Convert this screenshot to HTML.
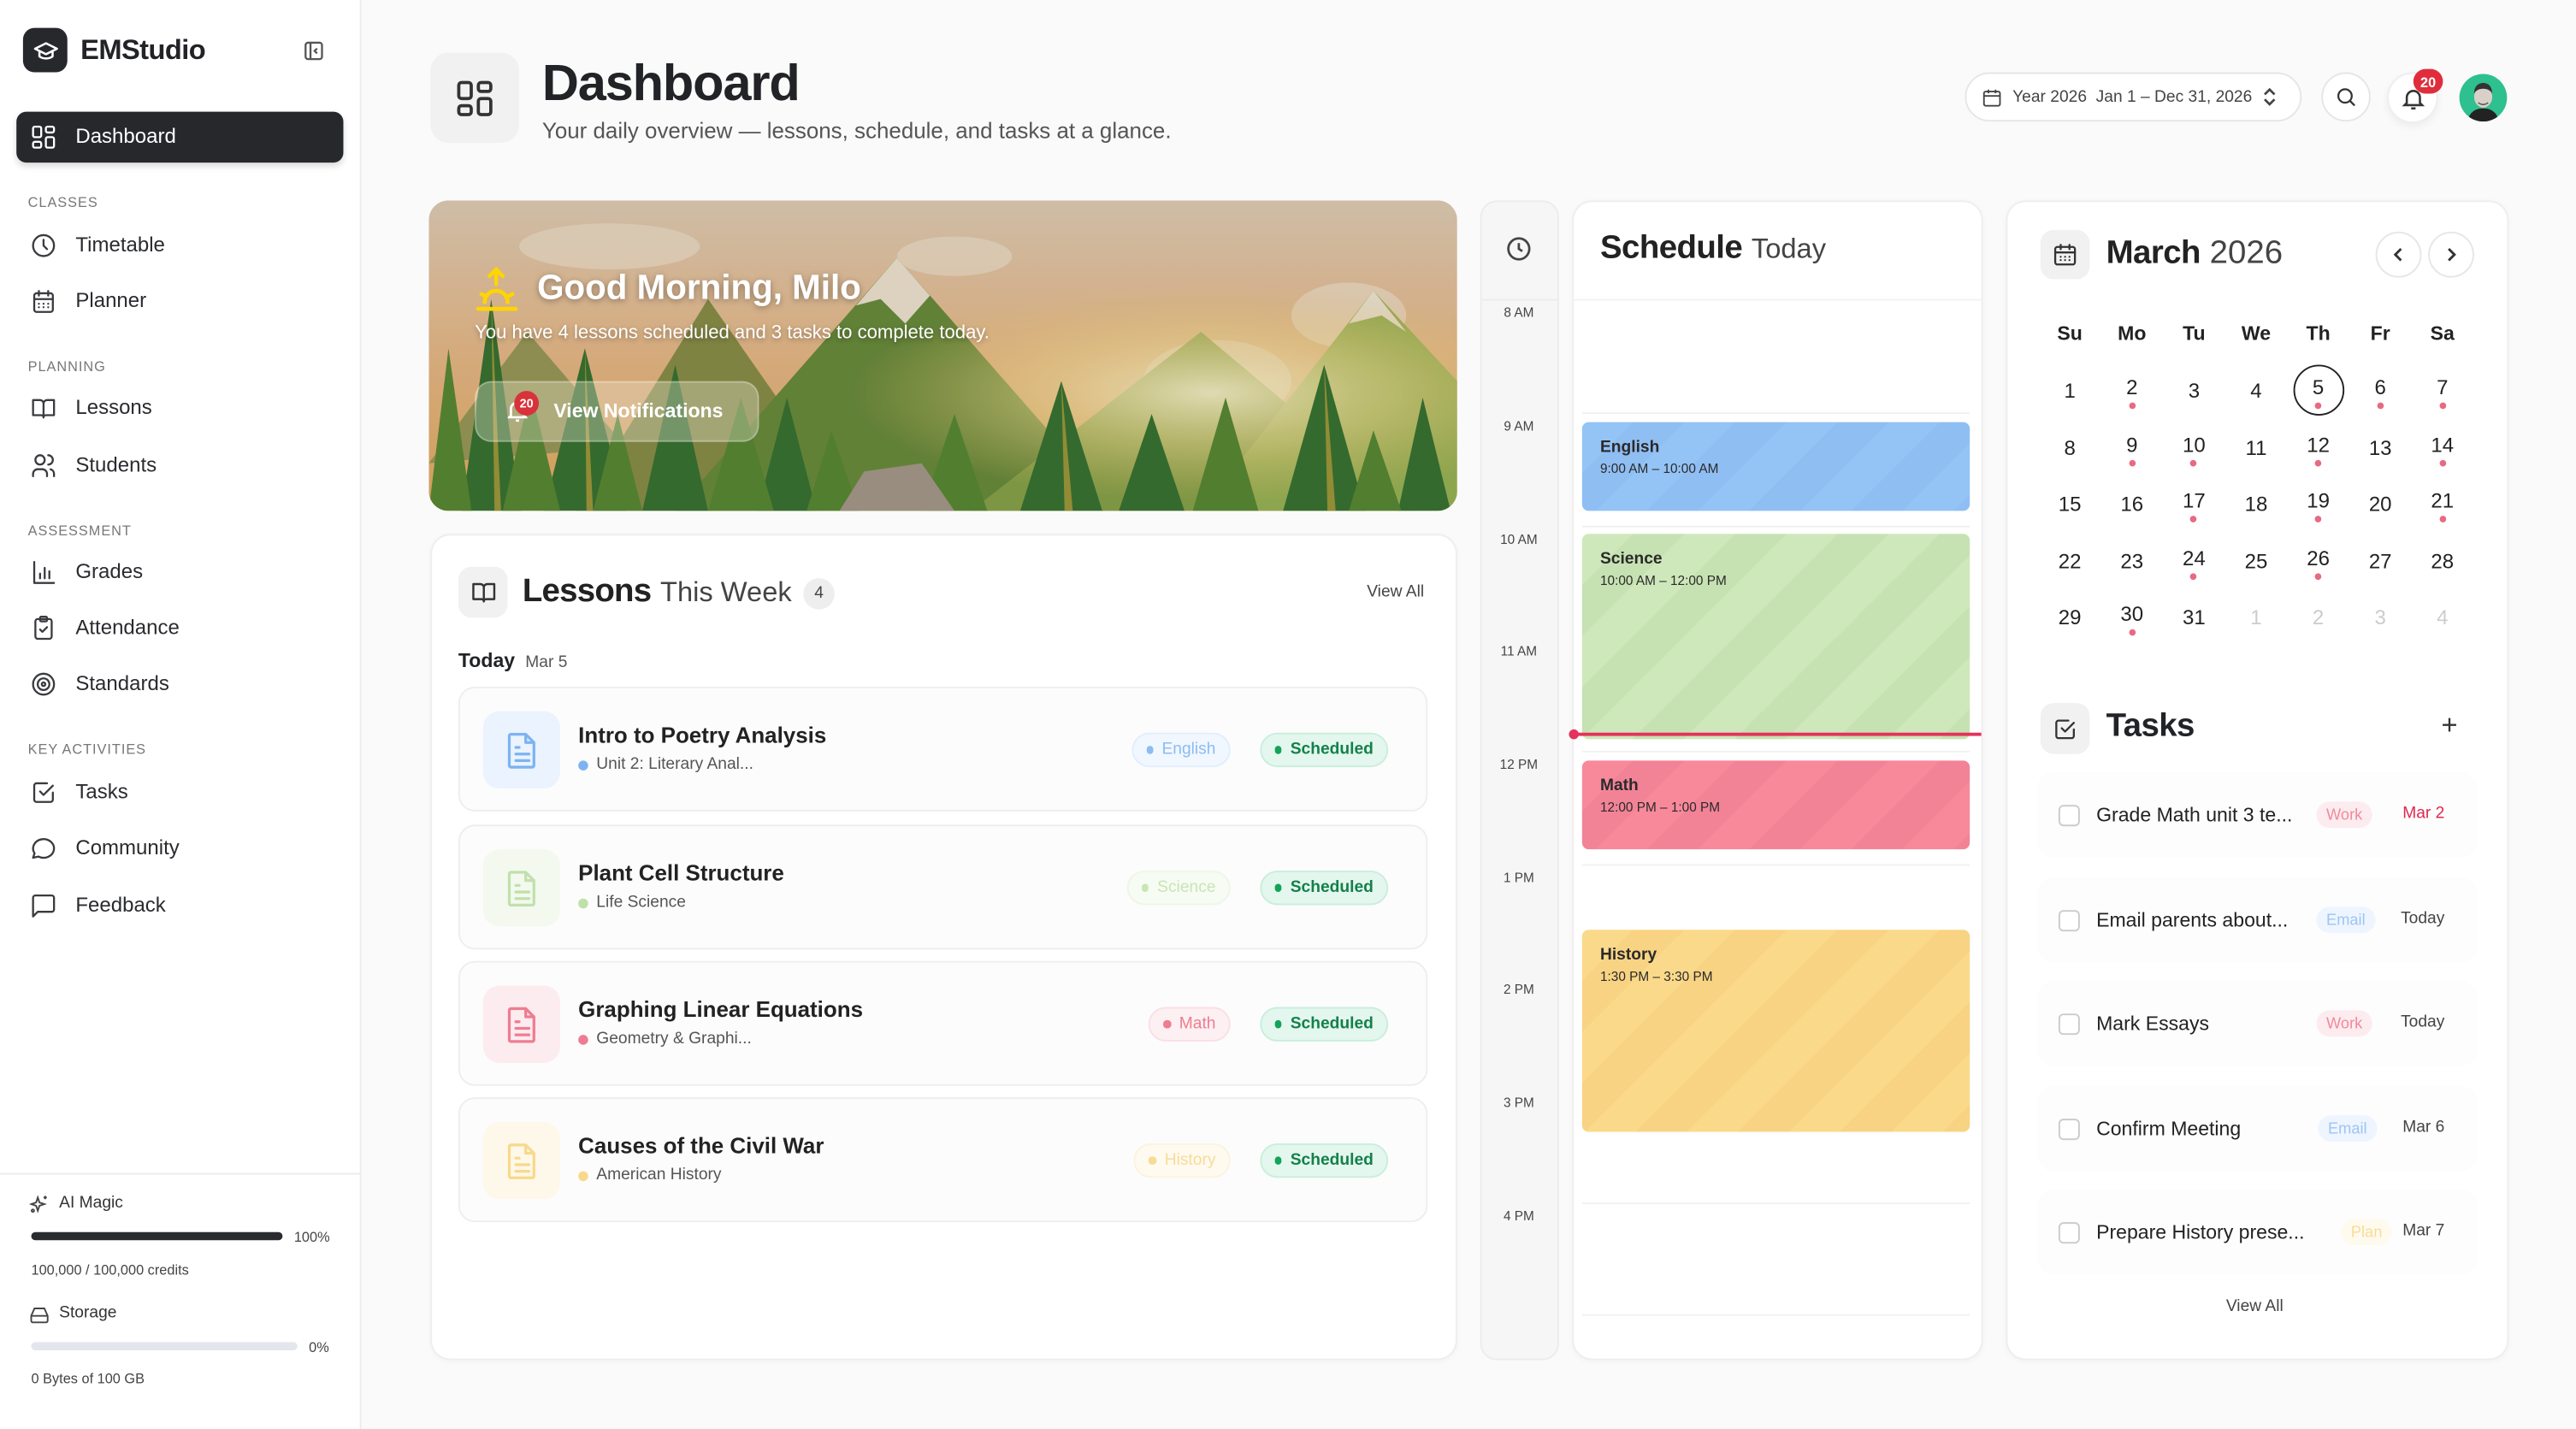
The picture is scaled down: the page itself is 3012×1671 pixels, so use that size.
<!DOCTYPE html>
<html><head><meta charset="utf-8">
<style>
*{box-sizing:border-box;margin:0;padding:0}
html,body{width:3012px;height:1670px;overflow:hidden;background:#fafafa}
#r{position:absolute;left:0;top:0;width:1568px;height:870px;transform:scale(1.92092);transform-origin:0 0;font-family:"Liberation Sans",sans-serif;color:#222327}
.a{position:absolute}
.sb{left:0;top:0;width:220px;height:870px;background:#fff;border-right:1px solid #ececec}
.nav{position:absolute;left:18px;display:flex;align-items:center;font-size:12.5px;color:#2a2b2f;height:20px}
.nav svg{width:17px;height:17px;margin-right:11px;fill:none;stroke:#3a3b3f;stroke-width:1.7;stroke-linecap:round;stroke-linejoin:round}
.sec{position:absolute;left:17px;font-size:8.5px;letter-spacing:.5px;color:#777}
.card{position:absolute;background:#fff;border:1px solid #eee;border-radius:12px;box-shadow:0 1px 4px rgba(0,0,0,.03)}
.ibox{position:absolute;background:#f1f1f1;border-radius:8px;display:flex;align-items:center;justify-content:center}
.ibox svg{fill:none;stroke:#333;stroke-width:1.8;stroke-linecap:round;stroke-linejoin:round}
.row{position:absolute;left:279px;width:590px;height:76px;border:1px solid #eee;border-radius:10px;background:#fcfcfc}
.row .ic{position:absolute;left:14px;top:14px;width:47px;height:47px;border-radius:10px;display:flex;align-items:center;justify-content:center}
.row .ic svg{width:20px;height:24px;fill:none;stroke-width:1.7;stroke-linecap:round;stroke-linejoin:round}
.row .t{position:absolute;left:72px;top:21px;font-size:13.5px;font-weight:bold;color:#222}
.row .s{position:absolute;left:72px;top:41px;font-size:10px;color:#555;display:flex;align-items:center}
.row .s i{display:inline-block;width:6px;height:6px;border-radius:50%;margin-right:5px}
.pill{position:absolute;top:27px;height:21px;border-radius:11px;font-size:10px;display:flex;align-items:center;padding:0 8px;border:1px solid}
.pill i{display:inline-block;width:4.5px;height:4.5px;border-radius:50%;margin-right:5px}
.sch{right:23px;background:#e3f7ee;border-color:#c9eedc;color:#14804a;font-weight:bold}
.sch i{background:#14a35a}
.hr{position:absolute;left:901px;width:47px;text-align:center;font-size:8px;color:#444}
.gl{position:absolute;left:963px;width:236px;height:1px;background:#f1f1f1}
.ev{position:absolute;left:963px;width:236px;border-radius:4px;padding:10px 11px;font-size:9.5px;color:#2a2a2a}
.ev b{display:block;font-size:10px;margin-bottom:2px}
.ev span{font-size:8px}
.cal{position:absolute;left:1241px;display:grid;grid-template-columns:repeat(7,37.8px)}
.cal div{height:34.5px;display:flex;flex-direction:column;align-items:center;justify-content:center;font-size:12.5px;color:#222;position:relative}
.cal div.d{padding-bottom:4px}
.cal div.d:after{content:"";position:absolute;top:24px;width:4px;height:4px;border-radius:50%;background:#e86a82}
.cal div.g{color:#ccc}
.task{position:absolute;left:1240px;width:268px;height:52px;border-radius:10px;background:#fdfdfd}
.task .cb{position:absolute;left:13px;top:20px;width:13px;height:13px;border:1.3px solid #ccc;border-radius:3px;background:#fff}
.task .tt{position:absolute;left:36px;top:19px;font-size:12px;color:#222}
.task .tg{position:absolute;top:18px;height:16px;padding:0 6px;border-radius:8px;font-size:9.5px;display:flex;align-items:center}
.task .dt{position:absolute;right:20px;top:20px;font-size:10px;color:#444}
</style></head><body><div id="r">

<!-- SIDEBAR -->
<div class="a sb"></div>
<div class="a" style="left:14px;top:17px;width:27px;height:27px;background:#27282c;border-radius:7px;display:flex;align-items:center;justify-content:center">
<svg width="16" height="16" viewBox="0 0 24 24" fill="none" stroke="#fff" stroke-width="2" stroke-linejoin="round"><path d="M2 10l10-5 10 5-10 5z"/><path d="M6 12v5c3 2.5 9 2.5 12 0v-5"/></svg></div>
<div class="a" style="left:49px;top:21px;font-size:17px;font-weight:bold;letter-spacing:-.3px">EMStudio</div>
<svg class="a" style="left:185px;top:25px" width="12" height="12" viewBox="0 0 12 12" fill="none" stroke="#555" stroke-width="1.2"><rect x="1" y="1" width="10" height="10" rx="1.5"/><path d="M4 1v10M8 4.5L6.5 6 8 7.5"/></svg>
<div class="a" style="left:10px;top:68px;width:199px;height:31px;background:#27282c;border-radius:6px;box-shadow:0 2px 4px rgba(0,0,0,.15)"></div>
<div class="nav" style="top:73px;color:#fff"><svg viewBox="0 0 24 24" style="stroke:#fff"><rect x="3" y="3" width="7" height="9" rx="1.5"/><rect x="14" y="3" width="7" height="5" rx="1.5"/><rect x="14" y="12" width="7" height="9" rx="1.5"/><rect x="3" y="16" width="7" height="5" rx="1.5"/></svg>Dashboard</div>
<div class="sec" style="top:118px">CLASSES</div>
<div class="nav" style="top:139px"><svg viewBox="0 0 24 24"><circle cx="12" cy="12" r="9"/><path d="M12 7v5l3 3"/></svg>Timetable</div>
<div class="nav" style="top:173px"><svg viewBox="0 0 24 24"><rect x="4" y="5" width="16" height="16" rx="2"/><path d="M8 3v4M16 3v4M4 10h16M8 14h.01M12 14h.01M16 14h.01M8 17h.01M12 17h.01M16 17h.01"/></svg>Planner</div>
<div class="sec" style="top:218px">PLANNING</div>
<div class="nav" style="top:238px"><svg viewBox="0 0 24 24"><path d="M3 5h6a3 3 0 0 1 3 3v12a2 2 0 0 0-2-2H3zM21 5h-6a3 3 0 0 0-3 3v12a2 2 0 0 1 2-2h7z"/></svg>Lessons</div>
<div class="nav" style="top:273px"><svg viewBox="0 0 24 24"><circle cx="9" cy="7" r="4"/><path d="M3 21v-2a4 4 0 0 1 4-4h4a4 4 0 0 1 4 4v2M16 3a4 4 0 0 1 0 8M21 21v-2a4 4 0 0 0-3-3.9"/></svg>Students</div>
<div class="sec" style="top:318px">ASSESSMENT</div>
<div class="nav" style="top:338px"><svg viewBox="0 0 24 24"><path d="M4 3v18h17M9 17v-4M13 17V8M17 17v-6"/></svg>Grades</div>
<div class="nav" style="top:372px"><svg viewBox="0 0 24 24"><rect x="5" y="4" width="14" height="17" rx="2"/><rect x="9" y="2" width="6" height="4" rx="1"/><path d="M9 13l2 2 4-4"/></svg>Attendance</div>
<div class="nav" style="top:406px"><svg viewBox="0 0 24 24"><circle cx="12" cy="12" r="9"/><circle cx="12" cy="12" r="5"/><circle cx="12" cy="12" r="1.5"/></svg>Standards</div>
<div class="sec" style="top:451px">KEY ACTIVITIES</div>
<div class="nav" style="top:472px"><svg viewBox="0 0 24 24"><path d="M9 11l3 3 8-8"/><path d="M20 12v6a2 2 0 0 1-2 2H6a2 2 0 0 1-2-2V6a2 2 0 0 1 2-2h9"/></svg>Tasks</div>
<div class="nav" style="top:506px"><svg viewBox="0 0 24 24"><path d="M3 20l1.3-3.9A9 8 0 1 1 7.7 19z"/></svg>Community</div>
<div class="nav" style="top:541px"><svg viewBox="0 0 24 24"><path d="M21 15a2 2 0 0 1-2 2H7l-4 4V5a2 2 0 0 1 2-2h14a2 2 0 0 1 2 2z"/></svg>Feedback</div>
<div class="a" style="left:0;top:714px;width:220px;height:1px;background:#ececec"></div>
<svg class="a" style="left:18px;top:727px" width="12" height="12" viewBox="0 0 24 24" fill="none" stroke="#444" stroke-width="2"><path d="M10 4l2 6 6 2-6 2-2 6-2-6-6-2 6-2zM19 2v4M17 4h4"/><circle cx="4" cy="20" r="1.5"/></svg>
<div class="a" style="left:36px;top:727px;font-size:10px;color:#333">AI Magic</div>
<div class="a" style="left:19px;top:750px;width:153px;height:5px;border-radius:3px;background:#2a2b2f"></div>
<div class="a" style="left:179px;top:748px;font-size:8.5px;color:#444">100%</div>
<div class="a" style="left:19px;top:768px;font-size:8.5px;color:#444">100,000 / 100,000 credits</div>
<svg class="a" style="left:18px;top:795px" width="12" height="11" viewBox="0 0 24 22" fill="none" stroke="#444" stroke-width="2"><path d="M2 12l4-9h12l4 9v6a2 2 0 0 1-2 2H4a2 2 0 0 1-2-2zM2 12h20"/></svg>
<div class="a" style="left:36px;top:794px;font-size:10px;color:#333">Storage</div>
<div class="a" style="left:19px;top:817px;width:162px;height:5px;border-radius:3px;background:#e3e6ec"></div>
<div class="a" style="left:188px;top:815px;font-size:8.5px;color:#444">0%</div>
<div class="a" style="left:19px;top:834px;font-size:8.5px;color:#444">0 Bytes of 100 GB</div>

<!-- HEADER -->
<div class="ibox" style="left:262px;top:32px;width:54px;height:55px;border-radius:11px"><svg width="26" height="26" viewBox="0 0 24 24" stroke-width="2.2"><rect x="3" y="3" width="7" height="9" rx="1.5"/><rect x="14" y="3" width="7" height="5" rx="1.5"/><rect x="14" y="12" width="7" height="9" rx="1.5"/><rect x="3" y="16" width="7" height="5" rx="1.5"/></svg></div>
<div class="a" style="left:330px;top:33px;font-size:31px;font-weight:bold;letter-spacing:-.6px;color:#222327">Dashboard</div>
<div class="a" style="left:330px;top:72px;font-size:13.5px;color:#555">Your daily overview — lessons, schedule, and tasks at a glance.</div>
<div class="a" style="left:1196px;top:44px;width:205px;height:30px;border:1px solid #e6e6e6;border-radius:15px;background:#fff;display:flex;align-items:center;padding-left:9px;font-size:10px;color:#444">
<svg width="13" height="13" viewBox="0 0 24 24" fill="none" stroke="#444" stroke-width="1.8"><rect x="3" y="5" width="18" height="16" rx="2"/><path d="M8 3v4M16 3v4M3 10h18"/></svg>
<span style="margin-left:6px">Year 2026&nbsp;&nbsp;Jan 1 – Dec 31, 2026</span>
<svg style="margin-left:6px" width="9" height="12" viewBox="0 0 9 12" fill="none" stroke="#444" stroke-width="1.4"><path d="M1.5 4.5L4.5 1.5l3 3M1.5 7.5l3 3 3-3"/></svg></div>
<div class="a" style="left:1413px;top:44px;width:30px;height:30px;border:1px solid #e6e6e6;border-radius:50%;background:#fff;display:flex;align-items:center;justify-content:center"><svg width="14" height="14" viewBox="0 0 24 24" fill="none" stroke="#333" stroke-width="2"><circle cx="11" cy="11" r="7"/><path d="M16 16l5 5"/></svg></div>
<div class="a" style="left:1453px;top:44px;width:31px;height:31px;border:1px solid #eee;border-radius:50%;background:#fff;box-shadow:0 2px 5px rgba(0,0,0,.06);display:flex;align-items:center;justify-content:center"><svg width="16" height="16" viewBox="0 0 24 24" fill="none" stroke="#333" stroke-width="2"><path d="M6 16V11a6 6 0 0 1 12 0v5l2 2H4zM10 21h4"/></svg></div>
<div class="a" style="left:1469px;top:42px;width:18px;height:15px;border-radius:8px;background:#e02d3c;color:#fff;font-size:8.5px;font-weight:bold;display:flex;align-items:center;justify-content:center">20</div>
<div class="a" style="left:1497px;top:45px;width:29px;height:29px;border-radius:50%;background:#2ec08f;overflow:hidden">
<svg width="29" height="29" viewBox="0 0 29 29"><path d="M5 29c1-6 5-8 9.5-8s8.5 2 9.5 8z" fill="#222"/><ellipse cx="14.5" cy="14" rx="5.5" ry="6.5" fill="#d9d0c8"/><path d="M9 12c0-5 3-6.5 5.5-6.5S20 7 20 12c-1-2-3-3-5.5-3S10 10 9 12z" fill="#333"/><path d="M11.5 17.5c2 1.5 4 1.5 6 0" stroke="#555" stroke-width=".8" fill="none"/></svg></div>

<!-- HERO -->
<div class="a" style="left:261px;top:122px;width:626px;height:189px;border-radius:12px;overflow:hidden">
<svg width="626" height="189" viewBox="0 0 626 189" preserveAspectRatio="none">
<defs><linearGradient id="sky" x1="0" y1="0" x2="0" y2="1"><stop offset="0" stop-color="#e0cdb6"/><stop offset=".5" stop-color="#e8b987"/><stop offset="1" stop-color="#e2ac60"/></linearGradient>
<radialGradient id="sun" cx=".76" cy=".62" r=".35"><stop offset="0" stop-color="#fff6d0" stop-opacity=".9"/><stop offset=".5" stop-color="#f6df95" stop-opacity=".5"/><stop offset="1" stop-color="#f2c870" stop-opacity="0"/></radialGradient></defs>
<rect width="626" height="189" fill="url(#sky)"/>
<g fill="#efdfcb" opacity=".7"><ellipse cx="110" cy="28" rx="55" ry="14"/><ellipse cx="320" cy="34" rx="35" ry="12"/><ellipse cx="480" cy="110" rx="45" ry="25"/><ellipse cx="560" cy="70" rx="35" ry="20"/></g>
<polygon points="0,160 60,80 120,150" fill="#9b9a58"/>
<polygon points="90,189 170,60 260,189" fill="#8a8f48"/>
<polygon points="150,189 285,35 420,189" fill="#6a8c3c"/>
<polygon points="285,35 260,64 275,60 290,75 305,58" fill="#efe4d0"/>
<polygon points="330,189 470,80 600,189" fill="#88a34a"/>
<polygon points="470,189 575,55 626,110 626,189" fill="#9bb456"/>
<polygon points="575,55 560,75 580,70 595,80" fill="#f0e6d3"/>
<rect width="626" height="189" fill="url(#sun)"/>
<g fill="#3a7332"><polygon points="20,189 38,60 56,189"/><polygon points="70,189 95,90 120,189"/><polygon points="130,189 150,100 170,189"/><polygon points="200,189 218,120 236,189"/><polygon points="360,189 385,110 410,189"/><polygon points="420,189 440,130 460,189"/><polygon points="520,189 545,100 570,189"/><polygon points="590,189 605,120 622,189"/></g>
<g fill="#5a8935"><polygon points="0,189 12,90 26,189"/><polygon points="45,189 62,115 80,189"/><polygon points="170,189 190,120 210,189"/><polygon points="230,189 245,140 262,189"/><polygon points="300,189 320,130 340,189"/><polygon points="465,189 485,120 505,189"/><polygon points="560,189 575,140 592,189"/><polygon points="100,189 115,130 130,189"/></g>
<g fill="#c9a83d" opacity=".7"><polygon points="38,60 44,189 40,189"/><polygon points="95,90 100,189 96,189"/><polygon points="545,100 552,189 547,189"/><polygon points="385,110 392,189 387,189"/></g>
<polygon points="250,189 265,165 300,160 320,189" fill="#a69a8a"/>
<rect width="626" height="189" fill="#000" opacity=".08"/>
</svg></div>
<svg class="a" style="left:289px;top:162px" width="27" height="28" viewBox="0 0 27 28" fill="none" stroke="#ffd500" stroke-width="2.4" stroke-linecap="round"><path d="M13 2v9M9 6l4-4 4 4M2 26h23M6 22a7 7 0 0 1 14 0M4 17l2 1M23 17l-2 1"/></svg>
<div class="a" style="left:327px;top:164px;font-size:21px;font-weight:bold;color:#fff;text-shadow:0 1px 4px rgba(0,0,0,.35)">Good Morning, Milo</div>
<div class="a" style="left:289px;top:197px;font-size:11.5px;color:#fff;text-shadow:0 1px 3px rgba(0,0,0,.35)">You have 4 lessons scheduled and 3 tasks to complete today.</div>
<div class="a" style="left:289px;top:232px;width:173px;height:37px;border-radius:10px;background:rgba(235,230,210,.35);border:1px solid rgba(255,255,255,.25)"></div>
<svg class="a" style="left:309px;top:242px" width="12" height="16" viewBox="0 0 12 16" fill="none" stroke="#fff" stroke-width="1.4"><path d="M2 11V7a4 4 0 0 1 8 0v4l1 1H1zM5 14h2"/></svg>
<div class="a" style="left:313px;top:238px;width:15px;height:15px;border-radius:50%;background:#d9323a;color:#fff;font-size:7.5px;font-weight:bold;display:flex;align-items:center;justify-content:center">20</div>
<div class="a" style="left:337px;top:243px;font-size:12px;font-weight:bold;color:#fff">View Notifications</div>

<!-- LESSONS -->
<div class="card" style="left:262px;top:325px;width:625px;height:503px"></div>
<div class="ibox" style="left:279px;top:345px;width:30px;height:31px"><svg width="17" height="17" viewBox="0 0 24 24"><path d="M3 5h6a3 3 0 0 1 3 3v12a2 2 0 0 0-2-2H3zM21 5h-6a3 3 0 0 0-3 3v12a2 2 0 0 1 2-2h7z"/></svg></div>
<div class="a" style="left:318px;top:349px;font-size:20px;color:#222;white-space:nowrap"><b style="letter-spacing:-.4px">Lessons</b> <span style="color:#444;font-size:17px">This Week</span></div>
<div class="a" style="left:489px;top:352px;width:19px;height:19px;border-radius:50%;background:#eee;font-size:10px;color:#444;display:flex;align-items:center;justify-content:center">4</div>
<div class="a" style="left:832px;top:355px;font-size:10px;color:#444">View All</div>
<div class="a" style="left:279px;top:395px;font-size:12px;font-weight:bold">Today <span style="font-weight:normal;font-size:10px;color:#555;margin-left:3px">Mar 5</span></div>

<div class="row" style="top:418px"><div class="ic" style="background:#eaf3fe"><svg viewBox="0 0 20 24" stroke="#7db3f2"><path d="M3 2h9l5 5v14a1 1 0 0 1-1 1H3a1 1 0 0 1-1-1V3a1 1 0 0 1 1-1zM12 2v5h5M6 10h2M6 14h8M6 18h8"/></svg></div><div class="t">Intro to Poetry Analysis</div><div class="s"><i style="background:#7db3f2"></i>Unit 2: Literary Anal...</div><div class="pill" style="right:119px;background:#f1f7fe;border-color:#e2eefc;color:#8cbcf2"><i style="background:#8cbcf2"></i>English</div><div class="pill sch"><i></i>Scheduled</div></div>
<div class="row" style="top:502px"><div class="ic" style="background:#f3f9ee"><svg viewBox="0 0 20 24" stroke="#c2e0ad"><path d="M3 2h9l5 5v14a1 1 0 0 1-1 1H3a1 1 0 0 1-1-1V3a1 1 0 0 1 1-1zM12 2v5h5M6 10h2M6 14h8M6 18h8"/></svg></div><div class="t">Plant Cell Structure</div><div class="s"><i style="background:#bfe0a8"></i>Life Science</div><div class="pill" style="right:119px;background:#f6fbf3;border-color:#eef6e8;color:#c9e5b5"><i style="background:#c9e5b5"></i>Science</div><div class="pill sch"><i></i>Scheduled</div></div>
<div class="row" style="top:585px"><div class="ic" style="background:#fdecef"><svg viewBox="0 0 20 24" stroke="#ee7d92"><path d="M3 2h9l5 5v14a1 1 0 0 1-1 1H3a1 1 0 0 1-1-1V3a1 1 0 0 1 1-1zM12 2v5h5M6 10h2M6 14h8M6 18h8"/></svg></div><div class="t">Graphing Linear Equations</div><div class="s"><i style="background:#f07c90"></i>Geometry &amp; Graphi...</div><div class="pill" style="right:119px;background:#fdf0f2;border-color:#fbdfe4;color:#ee7d92"><i style="background:#ee7d92"></i>Math</div><div class="pill sch"><i></i>Scheduled</div></div>
<div class="row" style="top:668px"><div class="ic" style="background:#fef8ea"><svg viewBox="0 0 20 24" stroke="#f8d98b"><path d="M3 2h9l5 5v14a1 1 0 0 1-1 1H3a1 1 0 0 1-1-1V3a1 1 0 0 1 1-1zM12 2v5h5M6 10h2M6 14h8M6 18h8"/></svg></div><div class="t">Causes of the Civil War</div><div class="s"><i style="background:#f8d98b"></i>American History</div><div class="pill" style="right:119px;background:#fefaf0;border-color:#fcf3df;color:#f8dc96"><i style="background:#f8dc96"></i>History</div><div class="pill sch"><i></i>Scheduled</div></div>

<!-- TIME COLUMN -->
<div class="a" style="left:901px;top:122px;width:48px;height:706px;background:#f6f6f6;border:1px solid #ececec;border-radius:10px"></div>
<svg class="a" style="left:916px;top:143px" width="17" height="17" viewBox="0 0 24 24" fill="none" stroke="#444" stroke-width="2"><circle cx="12" cy="12" r="9"/><path d="M12 7v5l3 2"/></svg>
<div class="hr" style="top:186px">8 AM</div><div class="hr" style="top:255px">9 AM</div><div class="hr" style="top:324px">10 AM</div><div class="hr" style="top:392px">11 AM</div><div class="hr" style="top:461px">12 PM</div><div class="hr" style="top:530px">1 PM</div><div class="hr" style="top:598px">2 PM</div><div class="hr" style="top:667px">3 PM</div><div class="hr" style="top:736px">4 PM</div>
<div class="a" style="left:902px;top:182px;width:46px;height:1px;background:#ececec"></div>

<!-- SCHEDULE -->
<div class="card" style="left:957px;top:122px;width:250px;height:706px"></div>
<div class="a" style="left:974px;top:140px;font-size:20px;color:#222"><b style="letter-spacing:-.3px">Schedule</b> <span style="font-size:17px;color:#444">Today</span></div>
<div class="gl" style="top:182px;left:958px;width:248px"></div>
<div class="gl" style="top:251px"></div><div class="gl" style="top:320px"></div><div class="gl" style="top:389px"></div><div class="gl" style="top:457px"></div><div class="gl" style="top:526px"></div><div class="gl" style="top:595px"></div><div class="gl" style="top:663px"></div><div class="gl" style="top:732px"></div><div class="gl" style="top:800px"></div>
<div class="ev" style="top:257px;height:54px;background:repeating-linear-gradient(135deg,#94c3f6 0 22px,#8fbef3 22px 44px)"><b>English</b><span>9:00 AM – 10:00 AM</span></div>
<div class="ev" style="top:325px;height:125px;background:repeating-linear-gradient(135deg,#cfe8bb 0 22px,#c6e2b2 22px 44px)"><b>Science</b><span>10:00 AM – 12:00 PM</span></div>
<div class="ev" style="top:463px;height:54px;background:repeating-linear-gradient(135deg,#f8899b 0 22px,#f28396 22px 44px)"><b>Math</b><span>12:00 PM – 1:00 PM</span></div>
<div class="ev" style="top:566px;height:123px;background:repeating-linear-gradient(135deg,#fbd98a 0 22px,#f8d383 22px 44px)"><b>History</b><span>1:30 PM – 3:30 PM</span></div>
<div class="a" style="left:957px;top:446px;width:249px;height:2px;background:#e4325a"></div>
<div class="a" style="left:955px;top:444px;width:6px;height:6px;border-radius:50%;background:#e4325a"></div>

<!-- CALENDAR / TASKS -->
<div class="card" style="left:1221px;top:122px;width:306px;height:706px"></div>
<div class="ibox" style="left:1242px;top:140px;width:30px;height:30px"><svg width="16" height="16" viewBox="0 0 24 24"><rect x="3" y="5" width="18" height="16" rx="2"/><path d="M8 3v4M16 3v4M3 10h18M8 14h.01M12 14h.01M16 14h.01M8 17h.01M12 17h.01M16 17h.01"/></svg></div>
<div class="a" style="left:1282px;top:143px;font-size:20px;color:#222"><b style="letter-spacing:-.3px">March</b> <span style="color:#444">2026</span></div>
<div class="a" style="left:1446px;top:141px;width:28px;height:28px;border:1px solid #e6e6e6;border-radius:50%;display:flex;align-items:center;justify-content:center"><svg width="8" height="10" viewBox="0 0 8 10" fill="none" stroke="#333" stroke-width="1.5"><path d="M5.5 1.5L2 5l3.5 3.5"/></svg></div>
<div class="a" style="left:1478px;top:141px;width:28px;height:28px;border:1px solid #e6e6e6;border-radius:50%;display:flex;align-items:center;justify-content:center"><svg width="8" height="10" viewBox="0 0 8 10" fill="none" stroke="#333" stroke-width="1.5"><path d="M2.5 1.5L6 5 2.5 8.5"/></svg></div>
<div class="cal" style="top:186px;font-weight:bold"><div style="font-weight:bold;font-size:12px">Su</div><div style="font-weight:bold;font-size:12px">Mo</div><div style="font-weight:bold;font-size:12px">Tu</div><div style="font-weight:bold;font-size:12px">We</div><div style="font-weight:bold;font-size:12px">Th</div><div style="font-weight:bold;font-size:12px">Fr</div><div style="font-weight:bold;font-size:12px">Sa</div></div>
<div class="a" style="left:1396px;top:222px;width:31px;height:31px;border:1.6px solid #222;border-radius:50%"></div>
<div class="cal" style="top:221px">
<div>1</div><div class="d">2</div><div>3</div><div>4</div><div class="d">5</div><div class="d">6</div><div class="d">7</div>
<div>8</div><div class="d">9</div><div class="d">10</div><div>11</div><div class="d">12</div><div>13</div><div class="d">14</div>
<div>15</div><div>16</div><div class="d">17</div><div>18</div><div class="d">19</div><div>20</div><div class="d">21</div>
<div>22</div><div>23</div><div class="d">24</div><div>25</div><div class="d">26</div><div>27</div><div>28</div>
<div>29</div><div class="d">30</div><div>31</div><div class="g">1</div><div class="g">2</div><div class="g">3</div><div class="g">4</div>
</div>
<div class="ibox" style="left:1242px;top:428px;width:30px;height:31px"><svg width="16" height="16" viewBox="0 0 24 24"><path d="M9 11l3 3 8-8"/><path d="M20 12v6a2 2 0 0 1-2 2H6a2 2 0 0 1-2-2V6a2 2 0 0 1 2-2h9"/></svg></div>
<div class="a" style="left:1282px;top:431px;font-size:20px;font-weight:bold;letter-spacing:-.3px">Tasks</div>
<div class="a" style="left:1486px;top:432px;font-size:17px;color:#333">+</div>
<div class="task" style="top:470px"><div class="cb"></div><div class="tt">Grade Math unit 3 te...</div><div class="tg" style="left:170px;background:#fdecef;color:#f08a9c">Work</div><div class="dt" style="color:#e0284f">Mar 2</div></div>
<div class="task" style="top:534px"><div class="cb"></div><div class="tt">Email parents about...</div><div class="tg" style="left:170px;background:#eef5fe;color:#9cc5f3">Email</div><div class="dt">Today</div></div>
<div class="task" style="top:597px"><div class="cb"></div><div class="tt">Mark Essays</div><div class="tg" style="left:170px;background:#fdecef;color:#f08a9c">Work</div><div class="dt">Today</div></div>
<div class="task" style="top:661px"><div class="cb"></div><div class="tt">Confirm Meeting</div><div class="tg" style="left:171px;background:#eef5fe;color:#9cc5f3">Email</div><div class="dt">Mar 6</div></div>
<div class="task" style="top:724px"><div class="cb"></div><div class="tt">Prepare History prese...</div><div class="tg" style="left:185px;background:#fefaee;color:#f8dc96">Plan</div><div class="dt">Mar 7</div></div>
<div class="a" style="left:1355px;top:790px;font-size:10px;color:#444">View All</div>

</div></body></html>
